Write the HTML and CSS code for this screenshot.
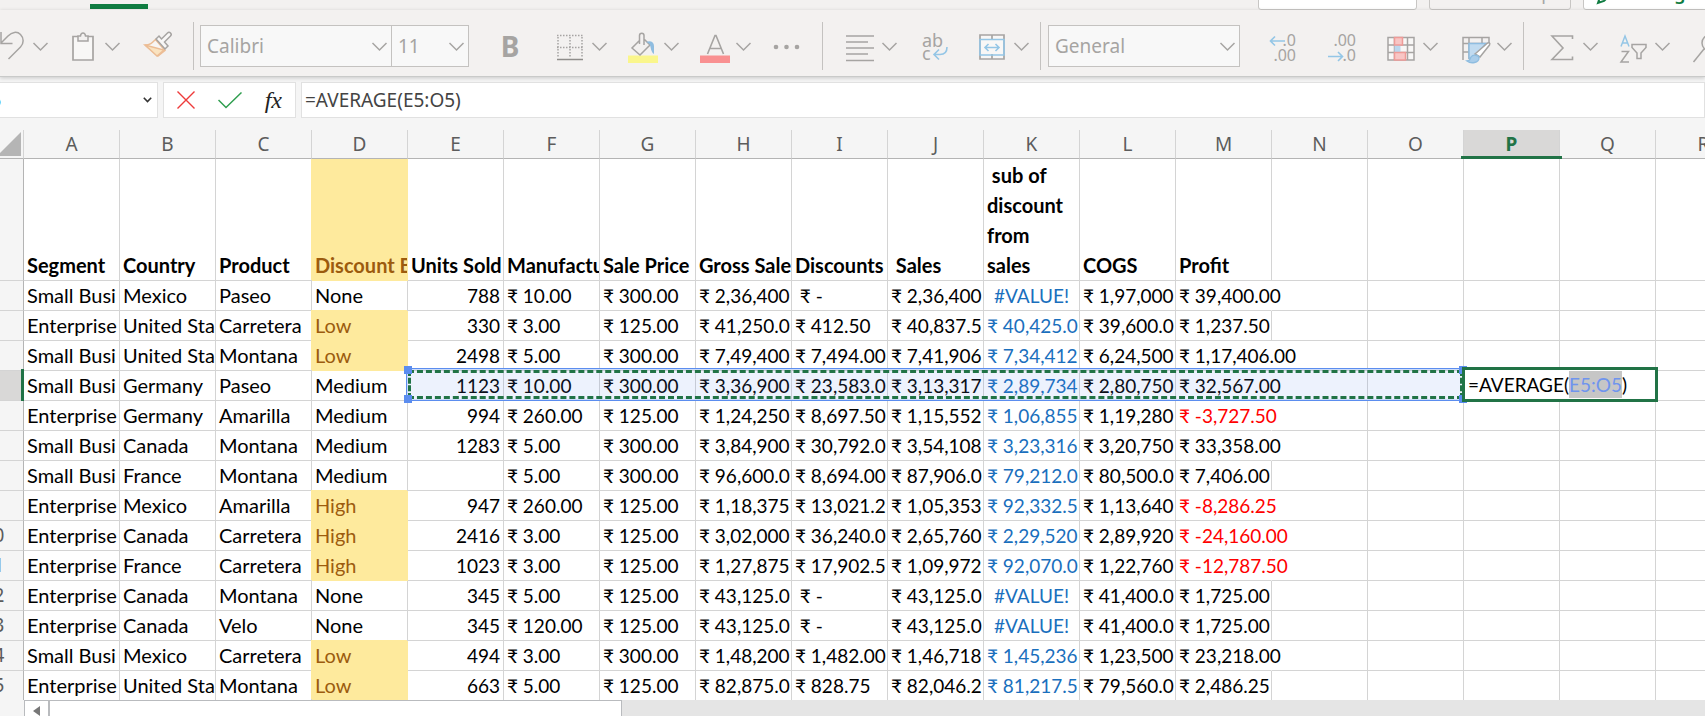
FILE: index.html
```html
<!DOCTYPE html>
<html lang="en">
<head>
<meta charset="utf-8">
<title>Workbook</title>
<link rel="stylesheet" href="styles.css">
</head>
<body>
<svg class="defs" aria-hidden="true">
  <symbol id="chev" viewBox="0 0 17 42"><path d="M1.5 18 8.5 25l7-7" fill="none" stroke="#a6a4a2" stroke-width="1.5"/></symbol>
</svg>
<div class="app">
  <header class="tabs">
    <span class="tab-mark"></span>
    <div class="tab-actions">
      <button class="pill pill-a">Comments</button>
      <button class="pill pill-b" disabled>Catch up</button>
      <button class="pill pill-c"><svg width="20" height="24" viewBox="0 0 20 24"><path d="M2 22l2-6L15 5l4 4L8 20z" fill="none" stroke="#107c41" stroke-width="2"/></svg>Editing</button>
    </div>
  </header>

  <div class="toolbar" role="toolbar" aria-label="Home">
    <button class="split first" aria-label="Undo"><svg class="icon" viewBox="0 0 42 42"><path d="M11 7v11.500h11.500M11 18l7-7c4-4 9-5 12.500-1.500s3.500 9 0 12.500L18.500 34" fill="none" stroke="#a6a4a2" stroke-width="1.500"/></svg><svg class="chev"><use href="#chev"/></svg></button>
    <button class="split" aria-label="Paste"><svg class="icon" viewBox="0 0 42 42"><path d="M16 11.500h-5V35h20V11.500h-5" fill="#f8f7f6" stroke="#a6a4a2" stroke-width="1.700"/><path d="M16 16v-5h2.500c.5-4 4.500-4 5 0H26v5z" fill="#f3f1f0" stroke="#a6a4a2" stroke-width="1.500"/></svg><svg class="chev"><use href="#chev"/></svg></button>
    <button class="tool s2" aria-label="Format Painter"><svg class="icon" viewBox="0 0 42 42"><path d="M9 20c5 0 7-2 10.500-5.500l9.500 11L22 31z" fill="#f8f6f4" stroke="#ecbd95" stroke-width="1.500"/><path d="M9 20l19 5-7 6z" fill="#fae3c0" stroke="#ecbd95" stroke-width="1.500"/><path d="M20 14l9 10 3-3-3.500-4 6-6a1.800 1.800 0 0 0-3-3l-6 6-2.500-3z" fill="#f8f7f6" stroke="#a6a4a2" stroke-width="1.500"/></svg></button>
    <span class="sep"></span>
    <label class="pick pick-font"><select aria-label="Font" disabled><option>Calibri</option></select><svg class="chev"><use href="#chev"/></svg></label>
    <label class="pick pick-size"><select aria-label="Font size" disabled><option>11</option></select><svg class="chev"><use href="#chev"/></svg></label>
    <button class="tool bold s20" aria-label="Bold">B</button>
    <button class="split s18" aria-label="Borders"><svg class="icon" viewBox="0 0 42 42"><path d="M8 10.500h26M8 22.500h26M9 12v21M21 12v21M33 12v21" fill="none" stroke="#a6a4a2" stroke-width="1.500" stroke-dasharray="1.500 1.500"/><path d="M8 34.500h26" stroke="#8f8d8b" stroke-width="1.500"/></svg><svg class="chev"><use href="#chev"/></svg></button>
    <button class="split" aria-label="Fill Color"><svg class="icon" viewBox="0 0 42 42"><path d="M7 30.500h30V38H7z" fill="#faf68c"/><path d="M18.500 15.500L11 23l8 7 10-10-5.500-5.500M18.500 19v-8.500a2.200 2.200 0 0 1 4.500 0V20" fill="none" stroke="#a6a4a2" stroke-width="1.500"/><path d="M25 17c4-2 8-.5 8 4v8c-3-2-3-6-4-9-1-2-2-2-4-3z" fill="#8fbde0"/></svg><svg class="chev"><use href="#chev"/></svg></button>
    <button class="split" aria-label="Font Color"><svg class="icon" viewBox="0 0 42 42"><path d="M7 30.500h30V38H7z" fill="#f99091"/><path d="M14.500 29L22 10.500h1L30.500 29M17 23.500h11" fill="none" stroke="#a6a4a2" stroke-width="1.600"/></svg><svg class="chev"><use href="#chev"/></svg></button>
    <button class="tool s13" aria-label="More font options"><svg class="icon" viewBox="0 0 42 42"><g fill="#a6a4a2"><circle cx="11" cy="22" r="2.300"/><circle cx="21.500" cy="22" r="2.300"/><circle cx="32" cy="22" r="2.300"/></g></svg></button>
    <span class="sep"></span>
    <button class="split s16" aria-label="Alignment"><svg class="icon" viewBox="0 0 42 42"><path d="M7 11h28M7 17h22M7 23h28M7 29h22M7 35.500h28" stroke="#a6a4a2" stroke-width="1.500"/></svg><svg class="chev"><use href="#chev"/></svg></button>
    <button class="tool s16" aria-label="Wrap Text"><svg class="icon" viewBox="0 0 42 42"><text x="8" y="22" class="glyph">ab</text><text x="8" y="35" class="glyph">c</text><path d="M33 22c0 5-3 7.500-7 7.500h-6M25 24.500l-5 5 5 5" fill="none" stroke="#94c6e6" stroke-width="1.600"/></svg></button>
    <button class="split s15" aria-label="Merge and Center"><svg class="icon" viewBox="0 0 42 42"><path d="M9 10h24v24H9zM21 10v5M21 29v5" fill="#f8f7f6" stroke="#a6a4a2" stroke-width="1.700"/><path d="M9 14.500h24v15.500H9zM14 22.500h14M17.500 19L14 22.500l3.500 3.500M24.500 19l3.500 3.500-3.500 3.500" fill="none" stroke="#94c6e6" stroke-width="1.600"/></svg><svg class="chev"><use href="#chev"/></svg></button>
    <span class="sep tight"></span>
    <label class="pick pick-format"><select aria-label="Number format" disabled><option>General</option></select><svg class="chev"><use href="#chev"/></svg></label>
    <button class="tool s22" aria-label="Increase Decimal"><svg class="icon" viewBox="0 0 42 42"><text x="34" y="21" class="digits">.0</text><text x="34" y="36" class="digits">.00</text><path d="M23 16H9M13 11.500L8.500 16l4.500 4.500" fill="none" stroke="#94c6e6" stroke-width="1.600"/></svg></button>
    <button class="tool s16" aria-label="Decrease Decimal"><svg class="icon" viewBox="0 0 42 42"><text x="36" y="21" class="digits">.00</text><text x="36" y="36" class="digits">.0</text><path d="M8 31.500h14M18 27l4.500 4.500L18 36" fill="none" stroke="#94c6e6" stroke-width="1.600"/></svg></button>
    <button class="split s18" aria-label="Conditional Formatting"><svg class="icon" viewBox="0 0 42 42"><path d="M8 12.500h26V35H8zM8 20h26M8 27.500h26M14.500 12.500V35M27.500 12.500V35" fill="#f8f7f6" stroke="#a6a4a2" stroke-width="1.500"/><path d="M14.500 20h6v7.500h-6z" fill="#bcd7ee"/><path d="M14.500 12.500h8V20h-8zM14.500 27.500h11V35h-11z" fill="#f8c6c5" stroke="#ee9b98" stroke-width="1.500"/></svg><svg class="chev"><use href="#chev"/></svg></button>
    <button class="split s15" aria-label="Format as Table"><svg class="icon" viewBox="0 0 42 42"><path d="M9 35V12.500h26V18M9 18.500h26M9 27h6M15 12.500V34M28 12.500v6" fill="none" stroke="#a6a4a2" stroke-width="1.500"/><path d="M15 18.500h17L20 33h-5z" fill="#c1dbf0" stroke="#8fbde0" stroke-width="1.500"/><path d="M21 29L33 18.500c2-1.500 3.500-.5 2.500 1.500L26 32z" fill="#fff" stroke="#a6a4a2" stroke-width="1.500"/><path d="M13 36c3 0 3-2 4-4 2-3 8-2 8 1 0 5-8 6-12 3z" fill="#a9cdea" stroke="#8fbde0" stroke-width="1.300"/></svg><svg class="chev"><use href="#chev"/></svg></button>
    <span class="sep tight"></span>
    <button class="split s16" aria-label="AutoSum"><svg class="icon" viewBox="0 0 42 42"><path d="M32.500 14v-3H12l11 12-11 11.500h20.500v-3" fill="none" stroke="#a6a4a2" stroke-width="1.600"/></svg><svg class="chev"><use href="#chev"/></svg></button>
    <button class="split" aria-label="Sort and Filter"><svg class="icon" viewBox="0 0 42 42"><path d="M9 21.500L13 11l4 10.500M10.500 18h5" fill="none" stroke="#94c6e6" stroke-width="1.500"/><path d="M9.500 26.500h7L9 37h8M20 19.500h14v3l-5 5.500v5.500h-4V28l-5-5.500z" fill="none" stroke="#a6a4a2" stroke-width="1.500"/></svg><svg class="chev"><use href="#chev"/></svg></button>
    <button class="tool s13" aria-label="Find and Select"><svg class="icon" viewBox="0 0 42 42"><circle cx="26" cy="18" r="8" fill="none" stroke="#a6a4a2" stroke-width="1.500"/><path d="M20 24L9.500 37" stroke="#a6a4a2" stroke-width="1.500"/></svg></button>
  </div>

  <div class="formula-row">
    <div class="name-box"><input aria-label="Name box" value="P5"><svg width="9" height="6" viewBox="0 0 9 6"><path d="M.8 .8l3.700 3.700L8.200 .8" fill="none" stroke="#333" stroke-width="1.600"/></svg></div>
    <div class="formula-actions">
      <button aria-label="Cancel"><svg width="18" height="18" viewBox="0 0 18 18"><path d="M.5 .5l17 17M17.500 .5l-17 17" stroke="#ee3b3b" stroke-width="1.400"/></svg></button>
      <button aria-label="Enter"><svg width="24" height="17" viewBox="0 0 24 17"><path d="M.5 8L8 15.500 23.500 .5" fill="none" stroke="#2f9e4f" stroke-width="1.500"/></svg></button>
      <button class="fx" aria-label="Insert Function">fx</button>
    </div>
    <input class="formula" aria-label="Formula bar" value="=AVERAGE(E5:O5)">
  </div>

  <main class="sheet">
    <table>
      <colgroup><col class="rowcol"><col span="18" class="datacol"></colgroup>
      <thead><tr><th class="corner"><svg width="24" height="24" viewBox="0 0 24 24"><path d="M24 0v24H0z" fill="#b5b5b5"/></svg></th><th>A</th><th>B</th><th>C</th><th>D</th><th>E</th><th>F</th><th>G</th><th>H</th><th>I</th><th>J</th><th>K</th><th>L</th><th>M</th><th>N</th><th>O</th><th class="current">P</th><th>Q</th><th>R</th></tr></thead>
      <tbody>
        <tr class="titles"><th>1</th><td>Segment</td><td>Country</td><td>Product</td><td class="mark">Discount B</td><td>Units Sold</td><td>Manufactu</td><td>Sale Price</td><td>Gross Sale</td><td>Discounts</td><td>&nbsp;Sales</td><td class="wrap">&nbsp;sub of<br>discount<br>from<br>sales</td><td>COGS</td><td>Profit</td><td></td><td></td><td></td><td></td><td></td></tr>
        <tr><th>2</th><td class="txt">Small Busi</td><td class="txt">Mexico</td><td class="txt">Paseo</td><td class="txt">None</td><td class="num">788</td><td>₹ 10.00</td><td>₹ 300.00</td><td>₹ 2,36,400</td><td>&nbsp;₹ -</td><td>₹ 2,36,400</td><td class="calc err">#VALUE!</td><td>₹ 1,97,000</td><td class="spill">₹ 39,400.00</td><td></td><td></td><td></td><td></td><td></td></tr>
        <tr><th>3</th><td class="txt">Enterprise</td><td class="txt">United Sta</td><td class="txt">Carretera</td><td class="txt mark">Low</td><td class="num">330</td><td>₹ 3.00</td><td>₹ 125.00</td><td>₹ 41,250.0</td><td>₹ 412.50</td><td>₹ 40,837.5</td><td class="calc">₹ 40,425.0</td><td>₹ 39,600.0</td><td>₹ 1,237.50</td><td></td><td></td><td></td><td></td><td></td></tr>
        <tr><th>4</th><td class="txt">Small Busi</td><td class="txt">United Sta</td><td class="txt">Montana</td><td class="txt mark">Low</td><td class="num">2498</td><td>₹ 5.00</td><td>₹ 300.00</td><td>₹ 7,49,400</td><td>₹ 7,494.00</td><td>₹ 7,41,906</td><td class="calc">₹ 7,34,412</td><td>₹ 6,24,500</td><td class="spill">₹ 1,17,406.00</td><td></td><td></td><td></td><td></td><td></td></tr>
        <tr><th class="current">5</th><td class="txt">Small Busi</td><td class="txt">Germany</td><td class="txt">Paseo</td><td class="txt">Medium</td><td class="num host">1123<span class="range"><i></i><i></i><i></i><i></i></span></td><td>₹ 10.00</td><td>₹ 300.00</td><td>₹ 3,36,900</td><td>₹ 23,583.0</td><td>₹ 3,13,317</td><td class="calc">₹ 2,89,734</td><td>₹ 2,80,750</td><td class="spill">₹ 32,567.00</td><td></td><td></td><td class="host"><div class="editor">=AVERAGE(<mark>E5:O5</mark>)</div></td><td></td><td></td></tr>
        <tr><th>6</th><td class="txt">Enterprise</td><td class="txt">Germany</td><td class="txt">Amarilla</td><td class="txt">Medium</td><td class="num">994</td><td>₹ 260.00</td><td>₹ 125.00</td><td>₹ 1,24,250</td><td>₹ 8,697.50</td><td>₹ 1,15,552</td><td class="calc">₹ 1,06,855</td><td>₹ 1,19,280</td><td class="spill neg">₹ -3,727.50</td><td></td><td></td><td></td><td></td><td></td></tr>
        <tr><th>7</th><td class="txt">Small Busi</td><td class="txt">Canada</td><td class="txt">Montana</td><td class="txt">Medium</td><td class="num">1283</td><td>₹ 5.00</td><td>₹ 300.00</td><td>₹ 3,84,900</td><td>₹ 30,792.0</td><td>₹ 3,54,108</td><td class="calc">₹ 3,23,316</td><td>₹ 3,20,750</td><td class="spill">₹ 33,358.00</td><td></td><td></td><td></td><td></td><td></td></tr>
        <tr><th>8</th><td class="txt">Small Busi</td><td class="txt">France</td><td class="txt">Montana</td><td class="txt">Medium</td><td></td><td>₹ 5.00</td><td>₹ 300.00</td><td>₹ 96,600.0</td><td>₹ 8,694.00</td><td>₹ 87,906.0</td><td class="calc">₹ 79,212.0</td><td>₹ 80,500.0</td><td>₹ 7,406.00</td><td></td><td></td><td></td><td></td><td></td></tr>
        <tr><th>9</th><td class="txt">Enterprise</td><td class="txt">Mexico</td><td class="txt">Amarilla</td><td class="txt mark">High</td><td class="num">947</td><td>₹ 260.00</td><td>₹ 125.00</td><td>₹ 1,18,375</td><td>₹ 13,021.2</td><td>₹ 1,05,353</td><td class="calc">₹ 92,332.5</td><td>₹ 1,13,640</td><td class="spill neg">₹ -8,286.25</td><td></td><td></td><td></td><td></td><td></td></tr>
        <tr><th>10</th><td class="txt">Enterprise</td><td class="txt">Canada</td><td class="txt">Carretera</td><td class="txt mark">High</td><td class="num">2416</td><td>₹ 3.00</td><td>₹ 125.00</td><td>₹ 3,02,000</td><td>₹ 36,240.0</td><td>₹ 2,65,760</td><td class="calc">₹ 2,29,520</td><td>₹ 2,89,920</td><td class="spill neg">₹ -24,160.00</td><td></td><td></td><td></td><td></td><td></td></tr>
        <tr><th>11</th><td class="txt">Enterprise</td><td class="txt">France</td><td class="txt">Carretera</td><td class="txt mark">High</td><td class="num">1023</td><td>₹ 3.00</td><td>₹ 125.00</td><td>₹ 1,27,875</td><td>₹ 17,902.5</td><td>₹ 1,09,972</td><td class="calc">₹ 92,070.0</td><td>₹ 1,22,760</td><td class="spill neg">₹ -12,787.50</td><td></td><td></td><td></td><td></td><td></td></tr>
        <tr><th>12</th><td class="txt">Enterprise</td><td class="txt">Canada</td><td class="txt">Montana</td><td class="txt">None</td><td class="num">345</td><td>₹ 5.00</td><td>₹ 125.00</td><td>₹ 43,125.0</td><td>&nbsp;₹ -</td><td>₹ 43,125.0</td><td class="calc err">#VALUE!</td><td>₹ 41,400.0</td><td>₹ 1,725.00</td><td></td><td></td><td></td><td></td><td></td></tr>
        <tr><th>13</th><td class="txt">Enterprise</td><td class="txt">Canada</td><td class="txt">Velo</td><td class="txt">None</td><td class="num">345</td><td>₹ 120.00</td><td>₹ 125.00</td><td>₹ 43,125.0</td><td>&nbsp;₹ -</td><td>₹ 43,125.0</td><td class="calc err">#VALUE!</td><td>₹ 41,400.0</td><td>₹ 1,725.00</td><td></td><td></td><td></td><td></td><td></td></tr>
        <tr><th>14</th><td class="txt">Small Busi</td><td class="txt">Mexico</td><td class="txt">Carretera</td><td class="txt mark">Low</td><td class="num">494</td><td>₹ 3.00</td><td>₹ 300.00</td><td>₹ 1,48,200</td><td>₹ 1,482.00</td><td>₹ 1,46,718</td><td class="calc">₹ 1,45,236</td><td>₹ 1,23,500</td><td class="spill">₹ 23,218.00</td><td></td><td></td><td></td><td></td><td></td></tr>
        <tr><th>15</th><td class="txt">Enterprise</td><td class="txt">United Sta</td><td class="txt">Montana</td><td class="txt mark">Low</td><td class="num">663</td><td>₹ 5.00</td><td>₹ 125.00</td><td>₹ 82,875.0</td><td>₹ 828.75</td><td>₹ 82,046.2</td><td class="calc">₹ 81,217.5</td><td>₹ 79,560.0</td><td>₹ 2,486.25</td><td></td><td></td><td></td><td></td><td></td></tr>
      </tbody>
    </table>
  </main>

  <div class="scrollbar">
    <button class="scroll-left" aria-label="Scroll left"><svg width="7" height="10" viewBox="0 0 7 10"><path d="M7 0v10L0 5z" fill="#777"/></svg></button>
    <div class="thumb"></div>
  </div>
</div>
</body>
</html>
```
FILE: styles.css
```css
* { box-sizing: border-box; }

body {
  margin: 0;
  background: #f5f5f5;
  font-family: "Noto Sans", "Open Sans", sans-serif;
  font-size: 19px;
  color: #000;
  overflow: hidden;
}

button {
  padding: 0;
  border: 0;
  background: none;
  font: inherit;
  color: inherit;
}

.defs { position: absolute; width: 0; height: 0; }

.app {
  display: flex;
  flex-direction: column;
  height: 100vh;
}

/* Tab strip */
.tabs {
  display: flex;
  justify-content: space-between;
  align-items: flex-end;
  height: 10px;
  background: #f3f1f0;
  overflow: hidden;
}
.tab-mark {
  width: 58px;
  height: 5px;
  margin: 0 0 1px 90px;
  background: #107c41;
}
.tab-actions { display: flex; gap: 12px; margin-right: -20px; }
.pill {
  display: flex;
  align-items: center;
  justify-content: center;
  gap: 8px;
  height: 42px;
  padding: 7px 0 0 12px;
  border: 1px solid #c8c6c4;
  border-radius: 3px;
  background: #fff;
  font-size: 18px;
}
.pill-a { width: 159px; }
.pill-b { width: 142px; padding-left: 30px; background: #f3f1f0; color: #a6a6a6; }
.pill-c { width: 142px; justify-content: flex-start; color: #107c41; font-weight: 600; }

/* Toolbar */
.toolbar {
  display: flex;
  align-items: center;
  height: 67px;
  padding-top: 5px;
  background: #f3f1f0;
  border-bottom: 1px solid #c9cac9;
  box-shadow: 0 1px 4px #00000030;
  overflow: hidden;
  flex: none;
  position: relative;
}
.tool, .split { flex: none; display: flex; height: 42px; }
.tool { width: 42px; }
.split { width: 59px; margin-left: 13px; }
.icon { width: 42px; height: 42px; flex: none; }
.chev { width: 17px; height: 42px; flex: none; }
.first { margin-left: -10px; }
.s2 { margin-left: 15px; }
.s13 { margin-left: 13px; }
.s15 { margin-left: 15px; }
.s16 { margin-left: 16px; }
.s18 { margin-left: 18px; }
.s20 { margin-left: 20px; }
.s22 { margin-left: 22px; }
.sep { flex: none; width: 1px; height: 48px; margin-left: 15px; background: #c4c2c0; }
.sep.tight { margin-left: 10px; }
.bold { align-items: center; justify-content: center; font-size: 28px; font-weight: 700; color: #a6a4a2; }
.glyph { font-size: 18px; fill: #a6a4a2; }
.digits { font-size: 16px; fill: #a6a4a2; text-anchor: end; }

.pick { position: relative; flex: none; height: 42px; }
.pick select {
  width: 100%;
  height: 100%;
  padding: 0 6px;
  appearance: none;
  border: 1px solid #c4c2c0;
  border-radius: 0;
  background: #f8f8f8;
  font: inherit;
  color: #a6a4a2;
  opacity: 1;
}
.pick .chev { position: absolute; right: 4px; top: 0; pointer-events: none; }
.pick-font { width: 192px; margin-left: 6px; }
.pick-size { width: 78px; margin-left: -1px; }
.pick-format { width: 192px; margin-left: 7px; }

/* Formula bar */
.formula-row {
  display: flex;
  gap: 5px;
  flex: none;
  height: 53px;
  padding: 5px 0 12px;
}
.name-box, .formula-actions, .formula {
  background: #fff;
  border: 1px solid #e1e1e1;
}
.name-box {
  display: flex;
  align-items: center;
  width: 198px;
  margin-left: -40px;
  padding: 0 5px 0 18px;
}
.name-box input {
  flex: 1;
  min-width: 0;
  padding: 0;
  border: 0;
  font: inherit;
  color: #1f7ad1;
}
.formula-actions {
  display: flex;
  align-items: center;
  justify-content: space-between;
  width: 133px;
  padding: 0 13px;
}
.formula-actions button { display: flex; }
.fx { font: italic 24px/30px "Liberation Serif", serif; color: #222; }
.formula {
  flex: 1;
  min-width: 0;
  padding: 0 3px;
  font: inherit;
  color: #444;
}

/* Grid */
.sheet { flex: none; overflow: hidden; background: #fff; }
table {
  width: 1788px;
  margin-left: -36px;
  table-layout: fixed;
  border-collapse: separate;
  border-spacing: 0;
}
.rowcol { width: 60px; }
.datacol { width: 96px; }
th, td {
  height: 30px;
  padding: 0 3px;
  border: solid #d4d4d4;
  border-width: 0 1px 1px 0;
  line-height: 29px;
  white-space: nowrap;
}
th {
  background: #f5f5f5;
  color: #5c5c5c;
  font-weight: 400;
}
thead th {
  position: relative;
  height: 29px;
  line-height: 28px;
  border-bottom-color: #b4b4b4;
}
thead th.current, tbody th.current { background: #d9d8d7; }
thead th.current { color: #217346; font-weight: 700; }
thead th.current::after {
  content: "";
  position: absolute;
  left: -3px;
  right: -3px;
  bottom: -1px;
  height: 3px;
  background: #217346;
  z-index: 1;
}
.corner svg { display: block; margin: 0 0 0 30px; }
tbody th { position: relative; border-right-color: #b4b4b4; }
tbody th.current::after {
  content: "";
  position: absolute;
  right: -1px;
  top: -2px;
  bottom: -2px;
  width: 3px;
  background: #217346;
}
td {
  overflow: hidden;
  font-family: Lato, "Noto Sans", sans-serif;
  text-align: left;
}
td.txt { font-size: 20px; }
.titles td { height: 122px; vertical-align: bottom; font-size: 20px; font-weight: 700; }
.titles .wrap { line-height: 30px; }
tbody tr:last-child > * { height: 29px; border-bottom: 0; }
.num { text-align: right; }
.mark {
  background: #feea9d;
  border-color: #feea9d;
  box-shadow: -1px -1px 0 #feea9d;
  color: #9c5b0e;
}
.calc { color: #1a6fbd; }
.err { text-align: center; }
.spill { overflow: visible; border-right-color: transparent; }
.neg { color: #f00; }
.host { position: relative; overflow: visible; }

/* Referenced range and in-cell editor */
.range {
  position: absolute;
  left: -2px;
  top: -3px;
  width: 1059px;
  height: 33px;
  border: 2px solid #5b8def;
  background: #5b8def1c;
}
.range::before {
  content: "";
  position: absolute;
  inset: 0;
  border: 3px dashed #217346;
  outline: 1px solid #ffffffb0;
}
.range i {
  position: absolute;
  width: 8px;
  height: 8px;
  background: #5b8def;
}
.range i:nth-child(1) { left: -4px; top: -4px; }
.range i:nth-child(2) { right: -4px; top: -4px; }
.range i:nth-child(3) { left: -4px; bottom: -4px; }
.range i:nth-child(4) { right: -4px; bottom: -4px; }
.editor {
  position: absolute;
  left: -2px;
  top: -4px;
  width: 196px;
  height: 35px;
  padding: 0 3px;
  border: 3px solid #217346;
  background: #fff;
  line-height: 30px;
  z-index: 1;
}
.editor mark {
  display: inline-block;
  height: 27px;
  line-height: 27px;
  background: #c6c6c6;
  color: #6f94ee;
}

/* Horizontal scrollbar */
.scrollbar {
  flex: 1;
  display: flex;
  margin-left: 24px;
  min-height: 0;
  background: #e5e5e5;
  overflow: hidden;
}
.scroll-left {
  display: flex;
  align-items: center;
  justify-content: center;
  width: 25px;
  height: 22px;
  border: 1px solid #b9bbbe;
  background: #fff;
}
.thumb {
  width: 573px;
  height: 22px;
  border: 1px solid #b9bbbe;
  background: #fff;
}
```
